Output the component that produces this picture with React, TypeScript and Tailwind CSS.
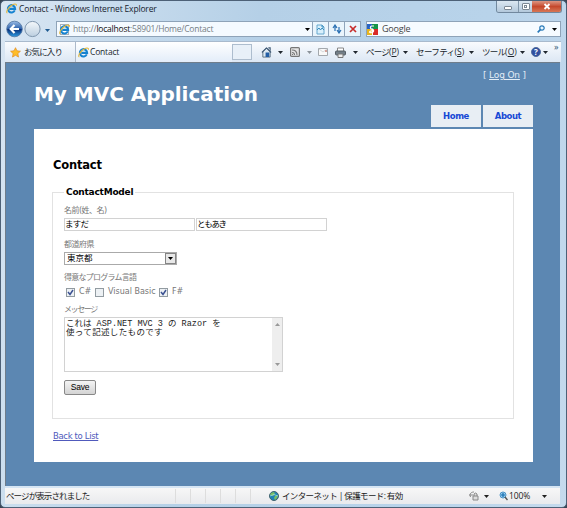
import type { ReactNode } from "react";

const UI = "font-['Open_Sans','Noto_Sans_CJK_JP',sans-serif]";
const WEB = "font-['DejaVu_Sans','Noto_Sans_CJK_JP',sans-serif]";

function Caret({ className = "" }: { className?: string }) {
  return (
    <svg className={`block h-[3px] w-[5px] shrink-0 ${className}`} viewBox="0 0 5 3">
      <path d="M0 0h5L2.5 3z" fill="currentColor" />
    </svg>
  );
}

function IeIcon({ className = "" }: { className?: string }) {
  return (
    <svg className={`block h-[11px] w-[11px] shrink-0 ${className}`} viewBox="0 0 12 12">
      <path d="M9.6 8.1A4 4 0 1 1 10 6.4H3.5" fill="none" stroke="#1683d0" strokeWidth="2.2" />
      <path d="M1.5 11C-.5 10.2 2 5.6 5.4 3 8.6 .6 12 .2 11.2 3" fill="none" stroke="#e5b83b" strokeWidth="1.2" />
    </svg>
  );
}

function NavButton({ children }: { children: ReactNode }) {
  return (
    <div className="flex h-full w-4 items-center justify-center border-l border-[#8fa5bb] bg-[#eaf5fc]">{children}</div>
  );
}

function TitleBar() {
  return (
    <div className="flex h-[19px] shrink-0 items-start pl-[5px] text-[#172431]">
      <IeIcon className="mt-[2px]" />
      <span className="ml-[2px] mt-[2px] whitespace-nowrap text-[8.5px] leading-[12px] tracking-[-0.17px]">
        Contact - Windows Internet Explorer
      </span>
      <div className="ml-auto mr-[4px] flex h-[12px] overflow-hidden rounded-b-[3px] border border-t-0 border-[#71889e]">
        <div className="flex w-[22px] items-center justify-center border-r border-[#8197aa] bg-linear-to-b from-[#dbe7f1] to-[#b3c8db]">
          <i className="mt-[2px] h-[4px] w-[8px] rounded-[1px] border border-[#7d8994] bg-white" />
        </div>
        <div className="flex w-[13px] items-center justify-center bg-linear-to-b from-[#dbe7f1] to-[#b3c8db]">
          <i className="flex h-[7px] w-[8px] items-center justify-center rounded-[1px] border border-[#7d8994] bg-white">
            <b className="h-[3px] w-[3px] border border-[#7d8994]" />
          </i>
        </div>
        <div className="flex w-[29px] items-center justify-center bg-linear-to-b from-[#dc9582] via-[#c5482c] to-[#d77756]">
          <svg className="h-[7px] w-[8px]" viewBox="0 0 8 7">
            <path d="m1.5 1 5 5m0-5-5 5" stroke="#fff" strokeWidth="1.8" />
          </svg>
        </div>
      </div>
    </div>
  );
}

function AddressBar() {
  return (
    <div className="flex h-[21px] shrink-0 items-start pl-[5px]">
      <svg className="h-[18px] w-[37px] shrink-0" viewBox="0 0 37 18">
        <defs>
          <linearGradient id="back" x2="0" y2="1">
            <stop stopColor="#9dbde5" />
            <stop offset=".48" stopColor="#2d62ad" />
            <stop offset=".52" stopColor="#082e78" />
            <stop offset="1" stopColor="#2d9de4" />
          </linearGradient>
          <linearGradient id="fwd" x2="0" y2="1">
            <stop stopColor="#f4f8fb" />
            <stop offset="1" stopColor="#bccfe0" />
          </linearGradient>
        </defs>
        <circle cx="8.5" cy="9" r="7.8" fill="url(#back)" stroke="#50749f" strokeWidth=".8" />
        <path d="M13 9H5m3.5-4L4.7 9l3.8 4" fill="none" stroke="#fff" strokeWidth="2.2" />
        <circle cx="26.5" cy="9" r="7.6" fill="url(#fwd)" stroke="#8097ae" />
      </svg>
      <Caret className="ml-[2px] mt-[9px] text-[#1e5a91]" />
      <div className="ml-[6px] mt-[1px] flex h-[16px] w-[305px] shrink-0 items-center border border-[#8ea3b8] bg-[#f4faff]">
        <div className="ml-[3px] flex h-[11px] w-[9px] items-center justify-center border border-[#a8b0b8] bg-white">
          <IeIcon className="h-[8px] w-[8px]" />
        </div>
        <span className="ml-[4px] whitespace-nowrap text-[8.5px] leading-[12px] tracking-[-0.22px] text-[#777e85]">
          http://<span className="text-[#111]">localhost</span>:58901/Home/Contact
        </span>
        <Caret className="ml-auto mr-[2px]" />
        <NavButton>
          <svg className="h-[11px] w-[9px]" viewBox="0 0 9 11">
            <path d="M1 1h5l2 2v7H1z" fill="#d9f0fc" stroke="#67a8ce" />
            <path d="m1 6 2-2 1.5 2L6 4l2 2M6 1v2h2" fill="none" stroke="#398dbe" />
          </svg>
        </NavButton>
        <NavButton>
          <svg className="h-[10px] w-[10px]" viewBox="0 0 10 10">
            <path d="M3 7V3h2M1 4l2-3 2 3M7 3v4H5m0-1 2 3 2-3" fill="none" stroke="#286fb2" strokeWidth="1.2" />
          </svg>
        </NavButton>
        <NavButton>
          <svg className="h-[8px] w-[8px]" viewBox="0 0 8 8">
            <path d="m1 1 6 6m0-6L1 7" stroke="#c72e2c" strokeWidth="1.7" />
          </svg>
        </NavButton>
      </div>
      <div className="ml-[5px] mt-[1px] flex h-[16px] w-[195px] shrink-0 items-center border border-[#8ea3b8] bg-[#f6fbff]">
        <svg className="h-[11px] w-[11px]" viewBox="0 0 11 11">
          <path fill="#2664c4" d="M0 0h5v5H0z" />
          <path fill="#169549" d="M5 0h6v5H5z" />
          <path fill="#e9b51c" d="M0 5h5v6H0z" />
          <path fill="#169549" d="M8 0h3v6H8z" />
          <path fill="#d92a27" d="M6 5h5v6H6z" />
          <path d="M7 2H4.500a1.500 1.500 0 1 0 1 3q2 1.500.5 3-2 1.500-3.500 0Q3 6.500 5.500 7" fill="none" stroke="#fff" strokeWidth="1.2" />
        </svg>
        <span className="ml-[4px] text-[9px] leading-[12px] tracking-[-0.2px] text-[#444]">Google</span>
        <svg className="ml-auto h-[8px] w-[8px]" viewBox="0 0 8 8">
          <circle cx="5" cy="3" r="2.2" fill="#e9f7ff" stroke="#2979b8" strokeWidth="1.2" />
          <path d="M3.4 4.7.7 7.3" stroke="#2979b8" strokeWidth="1.7" />
        </svg>
        <Caret className="ml-[7px] mr-[3px]" />
      </div>
    </div>
  );
}

function CommandBar() {
  return (
    <div className="ml-[4px] mr-[5px] flex h-[21px] shrink-0 items-center border-t border-[#a9bacd] bg-linear-to-b from-[#f9fbfe] to-[#dce7f4] text-[8.5px] text-[#20272e]">
      <div className="flex h-full w-[71px] shrink-0 items-center border-r border-[#adbaca] pl-[5px]">
        <svg className="h-[11px] w-[11px]" viewBox="0 0 12 12">
          <path d="m6 .7 1.6 3.4 3.8.5-2.800 2.600.7 3.800L6 9.100 2.700 11l.7-3.800L.6 4.600l3.800-.5z" fill="#ffbd28" stroke="#df8719" strokeWidth=".7" />
        </svg>
        <span className="ml-[3px] whitespace-nowrap tracking-[-0.9px]">お気に入り</span>
      </div>
      <div className="flex h-full w-[156px] shrink-0 items-center bg-linear-to-b from-white to-[#e3edf9] pl-[2px]">
        <IeIcon />
        <span className="ml-[1px] text-[8.5px] leading-[12px] tracking-[-0.2px]">Contact</span>
      </div>
      <div className="h-[16px] w-[20px] shrink-0 border border-[#adbdce] bg-[#e8f0f8]" />
      <svg className="ml-[9px] h-[11px] w-[11px] shrink-0" viewBox="0 0 12 12">
        <path d="M2 5v6h8V5L6 1z" fill="#dce8f1" stroke="#596e80" />
        <path d="m1 6 5-5 5 5M8 1h2v3" fill="none" stroke="#405b77" strokeWidth="1.2" />
        <path d="M5 11V6h4v5z" fill="#235ea5" />
      </svg>
      <Caret className="ml-[6px]" />
      <svg className="ml-[7px] h-[10px] w-[10px] shrink-0" viewBox="0 0 10 10">
        <rect x=".6" y=".6" width="8.8" height="8.8" rx="1" fill="#e5e5e5" stroke="#777" strokeWidth="1.2" />
        <path d="M2 5.5q2.5 0 2.5 2.5M2 3q5 0 5 5M2 7.500h1" fill="none" stroke="#777" strokeWidth="1.1" />
      </svg>
      <Caret className="ml-[7px] text-[#8b939a]" />
      <svg className="ml-[6px] h-[8px] w-[10px] shrink-0" viewBox="0 0 10 8">
        <path d="M.5.5h9v7h-9z" fill="#f9f9f9" stroke="#a3a8ad" />
        <path d="m1 1 4 3 4-3" fill="none" stroke="#d5d8da" />
        <path d="M7 2h2v2H7z" fill="#d2a199" />
      </svg>
      <svg className="ml-[7px] h-[11px] w-[11px] shrink-0" viewBox="0 0 11 11">
        <path d="M2.5 4V1h6v3" fill="#fff" stroke="#888" />
        <rect x=".5" y="4" width="10" height="4" rx="1" fill="#727e88" stroke="#555e65" />
        <path d="M3 7h5v3.500H3z" fill="#eee" stroke="#777" />
      </svg>
      <Caret className="ml-[7px]" />
      <span className="ml-[8px] w-[35px] shrink-0 whitespace-nowrap">
        <span className="tracking-[-0.8px]">ページ</span>(<u>P</u>)
      </span>
      <Caret className="ml-[2px]" />
      <span className="ml-[8px] w-[51px] shrink-0 whitespace-nowrap">
        <span className="tracking-[-0.6px]">セーフティ</span>(<u>S</u>)
      </span>
      <Caret className="ml-[2px]" />
      <span className="ml-[8px] w-[37px] shrink-0 whitespace-nowrap">
        <span className="tracking-[-0.8px]">ツール</span>(<u>O</u>)
      </span>
      <Caret className="ml-[1px]" />
      <div className="ml-[6px] flex h-[10px] w-[10px] shrink-0 items-center justify-center rounded-full border border-[#536e9c] bg-[#304fa0] text-[8px] font-bold leading-none text-white">?</div>
      <Caret className="ml-[2px]" />
      <span className="-mt-[11px] ml-[6px] text-[9px] leading-none text-[#315274]">»</span>
    </div>
  );
}

function Check({ checked = false }: { checked?: boolean }) {
  return (
    <span className="flex h-[9px] w-[9px] shrink-0 items-center justify-center border border-[#929ba1] bg-[#edf1f4]">
      {checked && (
        <svg className="h-[7px] w-[7px]" viewBox="0 0 7 7">
          <path d="m1 3 2 2.5L6 1" fill="none" stroke="#3b5192" strokeWidth="1.5" />
        </svg>
      )}
    </span>
  );
}

function ContactForm() {
  const label = "block whitespace-nowrap text-[8px] leading-[12px] text-[#777]";
  return (
    <fieldset className="ml-[18px] mt-[14px] h-[233px] w-[462px] border border-[#e2e2e2] pl-[11px]">
      <legend className="h-[13px] px-[2px] text-[9px] font-bold leading-[13px] tracking-[-0.22px] text-black">
        ContactModel
      </legend>
      <div className={`${label} mt-[6px] tracking-[-0.5px]`}>名前(姓、名)</div>
      <div className="mt-[1px] flex gap-[2px] text-[8.5px] tracking-[-0.8px] text-black">
        <div className="h-[13px] w-[131px] border border-[#d2d2d2] leading-[10px]">ますだ</div>
        <div className="-ml-px h-[13px] w-[131px] border border-[#d2d2d2] leading-[10px] tracking-[-1.3px]">ともあき</div>
      </div>
      <div className={`${label} mt-[8px] tracking-[-0.5px]`}>都道府県</div>
      <div className="mt-[1px] flex h-[13px] w-[113px] items-center justify-between border border-[#aaa] pl-[2px] text-[8.5px] leading-none text-black">
        <span>東京都</span>
        <div className="flex h-[11px] w-[11px] items-center justify-center border border-[#858585] bg-[#e8e8e8]">
          <Caret />
        </div>
      </div>
      <div className={`${label} mt-[7px] tracking-[-0.75px]`}>得意なプログラム言語</div>
      <div className="mt-[1px] flex h-[14px] items-center pl-[2px] text-[8px] leading-none text-[#777]">
        <Check checked />
        <span className="ml-[4px] w-[14px]">C#</span>
        <span className="ml-[2px]"><Check /></span>
        <span className="ml-[4px] w-[48px] whitespace-nowrap">Visual Basic</span>
        <span className="ml-[3px]"><Check checked /></span>
        <span className="ml-[4px]">F#</span>
      </div>
      <div className={`${label} mt-[5px] tracking-[-1.4px]`}>メッセージ</div>
      <div className="mt-[1px] flex h-[55px] w-[219px] border border-[#d2d2d2]">
        <div className="flex-1 whitespace-nowrap pl-[1px] pt-[2px] font-['Liberation_Mono','Noto_Sans_CJK_JP',monospace] text-[8.5px] leading-[9px] text-[#222]">
          <div>これは ASP.NET MVC 3 の Razor を</div>
          <div className="tracking-[0.35px]">使って記述したものです</div>
        </div>
        <div className="flex w-[10px] flex-col items-center justify-between bg-[#eee] py-[5px] text-[#999]">
          <Caret className="rotate-180" />
          <Caret />
        </div>
      </div>
      <button className="mt-[8px] flex h-[15px] w-[32px] items-center justify-center rounded-[2px] border border-[#888] bg-linear-to-b from-[#f4f4f4] to-[#d4d4d4] font-['Liberation_Sans',sans-serif] text-[8.5px] leading-none tracking-[-0.2px] text-black">
        Save
      </button>
    </fieldset>
  );
}

function Page() {
  return (
    <div className={`ml-[4px] mr-[6px] flex h-[424px] shrink-0 flex-col border-l border-t border-[#6f7d8b] bg-[#5c87b2] pl-[28px] ${WEB}`}>
      <div className="mt-[6px] h-[12px] pl-[449px] text-[9px] leading-[12px] tracking-[-0.15px] text-[#e2edf7]">
        [ <u>Log On</u> ]
      </div>
      <div className="flex h-[48px] w-[499px] items-start justify-between">
        <h1 className="mt-px whitespace-nowrap text-[20px] font-bold leading-[24px] tracking-[-0.03px] text-white">My MVC Application</h1>
        <nav className="mt-[24px] flex h-[22px] gap-[2px] text-[8.5px] font-bold leading-[22px] tracking-[-0.45px] text-[#1748d5]">
          <a className="w-[50px] bg-[#e8eef4] text-center">Home</a>
          <a className="w-[50px] bg-[#e8eef4] text-center">About</a>
        </nav>
      </div>
      <main className="h-[333px] w-[499px] bg-white pt-[29px]">
        <h2 className="ml-[19px] h-[14px] text-[11.5px] font-bold leading-[14px] tracking-[-0.2px] text-black">Contact</h2>
        <ContactForm />
        <a className="ml-[19px] mt-[11px] block text-[8.5px] leading-[12px] tracking-[-0.35px] text-[#505abc] underline">Back to List</a>
      </main>
    </div>
  );
}

function StatusBar() {
  return (
    <div className="ml-[4px] mr-[6px] flex h-[18px] shrink-0 items-center border-t-2 border-[#d5e5f4] bg-linear-to-b from-[#f7f7f7] to-[#e9eaed] text-[8.5px] leading-none text-[#202020]">
      <span className="ml-[1px] w-[169px] shrink-0 whitespace-nowrap tracking-[-0.9px]">ページが表示されました</span>
      <div className="flex h-[14px] w-[92px] shrink-0">
        {[0, 1, 2, 3, 4, 5].map((cell) => (
          <i key={cell} className="w-[15px] border-l border-[#ddd]" />
        ))}
      </div>
      <svg className="ml-[2px] h-[10px] w-[10px] shrink-0" viewBox="0 0 10 10">
        <circle cx="5" cy="5" r="4.5" fill="#1e82b5" stroke="#42636e" />
        <path d="m2 2 3-1 1 2-2 2-3-1zm4 3 3-1-1 3-2 2-1-2z" fill="#78bd64" />
        <path d="M1 5q4-3 8 0" fill="none" stroke="#a6e1ec" strokeWidth=".7" />
      </svg>
      <span className="ml-[3px] w-[183px] shrink-0 whitespace-nowrap tracking-[-0.63px]">インターネット | 保護モード: 有効</span>
      <svg className="ml-[3px] h-[10px] w-[11px] shrink-0" viewBox="0 0 11 10">
        <path d="M1 4h4M2.5 6C1 2 4 1 6 1" fill="none" stroke="#888" />
        <path d="M5 5h5v4H5zM6 5V3q1.5-2 3 0v2" fill="#ddd" stroke="#888" />
      </svg>
      <Caret className="ml-[5px]" />
      <svg className="ml-[10px] h-[10px] w-[9px] shrink-0" viewBox="0 0 9 10">
        <circle cx="4" cy="4" r="3" fill="#9acdf0" stroke="#4a93c7" />
        <path d="M2 4h4M4 2v4" stroke="#176fae" strokeWidth="1.2" />
        <path d="m6 6 2.5 3" stroke="#555" strokeWidth="1.4" />
      </svg>
      <span className="ml-[1px] w-[23px] shrink-0 tracking-[-0.1px]">100%</span>
      <Caret className="ml-[10px]" />
    </div>
  );
}

export default function App() {
  return (
    <div className={`h-[508px] w-[567px] bg-[#384554] ${UI}`}>
      <div className="flex h-[508px] w-[567px] flex-col overflow-hidden rounded-[5px] border border-[#4d6177] bg-[linear-gradient(100deg,#d9e6f3_0%,#c8dced_17%,#b5d0e7_40%,#b8d3ea_75%,#c5daed_100%)]">
        <TitleBar />
        <AddressBar />
        <CommandBar />
        <Page />
        <StatusBar />
      </div>
    </div>
  );
}
